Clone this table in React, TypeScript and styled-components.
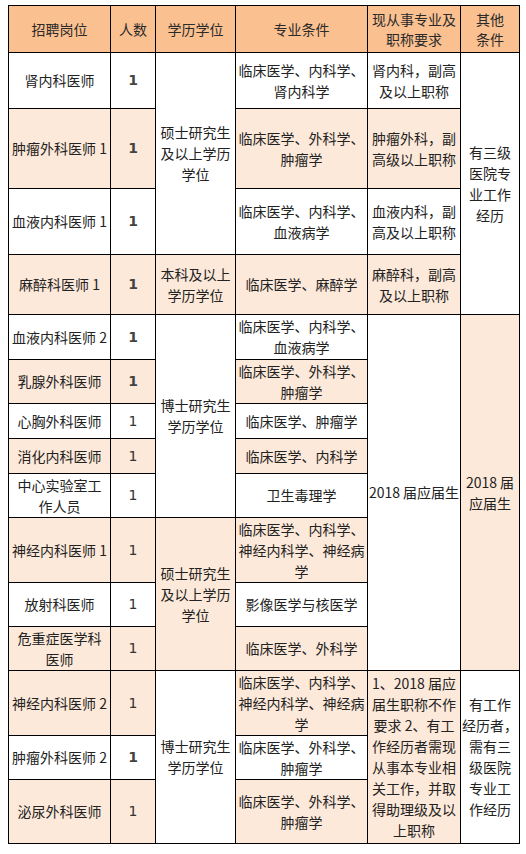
import React from 'react';
import styled, { createGlobalStyle } from 'styled-components';

type Tone = 'head' | 'white' | 'peach';

const GlobalStyle = createGlobalStyle`
  html, body {
    margin: 0;
    padding: 0;
    background: #ffffff;
  }
  body {
    font-family: "Noto Sans CJK SC", "Noto Sans", "DejaVu Sans", sans-serif;
  }
`;

const Page = styled.div`
  padding: 5px 0 0 8px;
`;

const Sheet = styled.div`
  display: grid;
  box-sizing: border-box;
  width: 512px;
  grid-template-columns: 102px 45px 80px 132px 93px 59px;
  grid-template-rows:
    47px 56px 80px 66px 60px 45px 44px 35px 35px 44px
    65px 44px 44px 65px 44px 64px;
  border-left: 1px solid #000;
  border-top: 1px solid #000;
`;

const toneColor: Record<Tone, string> = {
  head: '#fac090',
  white: '#ffffff',
  peach: '#fde9d9',
};

const Cell = styled.div<{ $c: number; $r: number; $span: number; $tone: Tone; $bold: boolean }>`
  grid-column: ${(p) => p.$c};
  grid-row: ${(p) => p.$r} / span ${(p) => p.$span};
  box-sizing: border-box;
  border-right: 1px solid #000;
  border-bottom: 1px solid #000;
  background: ${(p) => toneColor[p.$tone]};
  display: flex;
  align-items: center;
  justify-content: center;
  text-align: center;
  padding: 0 1px;
  overflow: hidden;
  white-space: nowrap;
  font-size: 14px;
  line-height: 21px;
  color: #222;
  font-weight: ${(p) => (p.$bold ? 700 : 400)};
`;

const Head = styled(Cell)`
  line-height: 20px;
  color: #2a2a2a;
`;

const Count = styled(Cell)`
  font-family: "DejaVu Sans", "Noto Sans", sans-serif;
  font-size: 14px;
  color: ${(p) => (p.$bold ? '#444' : '#333')};
`;

const Text = styled.span`
  display: block;
`;

type CellDef = {
  c: number;
  r: number;
  span?: number;
  tone: Tone;
  lines: string[];
  bold?: boolean;
  kind?: 'head' | 'count' | 'text';
};

const W: Tone = 'white';
const P: Tone = 'peach';

const cells: CellDef[] = [
  { c: 1, r: 1, tone: 'head', lines: ['招聘岗位'], kind: 'head' },
  { c: 2, r: 1, tone: 'head', lines: ['人数'], kind: 'head' },
  { c: 3, r: 1, tone: 'head', lines: ['学历学位'], kind: 'head' },
  { c: 4, r: 1, tone: 'head', lines: ['专业条件'], kind: 'head' },
  { c: 5, r: 1, tone: 'head', lines: ['现从事专业及', '职称要求'], kind: 'head' },
  { c: 6, r: 1, tone: 'head', lines: ['其他', '条件'], kind: 'head' },

  { c: 1, r: 2, tone: W, lines: ['肾内科医师'] },
  { c: 2, r: 2, tone: W, lines: ['1'], kind: 'count', bold: true },
  { c: 3, r: 2, span: 3, tone: W, lines: ['硕士研究生', '及以上学历', '学位'] },
  { c: 4, r: 2, tone: W, lines: ['临床医学、内科学、', '肾内科学'] },
  { c: 5, r: 2, tone: W, lines: ['肾内科，副高', '及以上职称'] },
  { c: 6, r: 2, span: 4, tone: W, lines: ['有三级', '医院专', '业工作', '经历'] },

  { c: 1, r: 3, tone: P, lines: ['肿瘤外科医师 1'] },
  { c: 2, r: 3, tone: P, lines: ['1'], kind: 'count', bold: true },
  { c: 4, r: 3, tone: P, lines: ['临床医学、外科学、', '肿瘤学'] },
  { c: 5, r: 3, tone: P, lines: ['肿瘤外科，副', '高级以上职称'] },

  { c: 1, r: 4, tone: W, lines: ['血液内科医师 1'] },
  { c: 2, r: 4, tone: W, lines: ['1'], kind: 'count', bold: true },
  { c: 4, r: 4, tone: W, lines: ['临床医学、内科学、', '血液病学'] },
  { c: 5, r: 4, tone: W, lines: ['血液内科，副', '高及以上职称'] },

  { c: 1, r: 5, tone: P, lines: ['麻醉科医师 1'] },
  { c: 2, r: 5, tone: P, lines: ['1'], kind: 'count', bold: true },
  { c: 3, r: 5, tone: P, lines: ['本科及以上', '学历学位'] },
  { c: 4, r: 5, tone: P, lines: ['临床医学、麻醉学'] },
  { c: 5, r: 5, tone: P, lines: ['麻醉科，副高', '及以上职称'] },

  { c: 1, r: 6, tone: W, lines: ['血液内科医师 2'] },
  { c: 2, r: 6, tone: W, lines: ['1'], kind: 'count', bold: true },
  { c: 3, r: 6, span: 5, tone: W, lines: ['博士研究生', '学历学位'] },
  { c: 4, r: 6, tone: W, lines: ['临床医学、内科学、', '血液病学'] },
  { c: 5, r: 6, span: 8, tone: W, lines: ['2018 届应届生'] },
  { c: 6, r: 6, span: 8, tone: P, lines: ['2018 届', '应届生'] },

  { c: 1, r: 7, tone: P, lines: ['乳腺外科医师'] },
  { c: 2, r: 7, tone: P, lines: ['1'], kind: 'count', bold: true },
  { c: 4, r: 7, tone: P, lines: ['临床医学、外科学、', '肿瘤学'] },

  { c: 1, r: 8, tone: W, lines: ['心胸外科医师'] },
  { c: 2, r: 8, tone: W, lines: ['1'], kind: 'count' },
  { c: 4, r: 8, tone: W, lines: ['临床医学、肿瘤学'] },

  { c: 1, r: 9, tone: P, lines: ['消化内科医师'] },
  { c: 2, r: 9, tone: P, lines: ['1'], kind: 'count' },
  { c: 4, r: 9, tone: P, lines: ['临床医学、内科学'] },

  { c: 1, r: 10, tone: W, lines: ['中心实验室工', '作人员'] },
  { c: 2, r: 10, tone: W, lines: ['1'], kind: 'count' },
  { c: 4, r: 10, tone: W, lines: ['卫生毒理学'] },

  { c: 1, r: 11, tone: P, lines: ['神经内科医师 1'] },
  { c: 2, r: 11, tone: P, lines: ['1'], kind: 'count' },
  { c: 3, r: 11, span: 3, tone: P, lines: ['硕士研究生', '及以上学历', '学位'] },
  { c: 4, r: 11, tone: P, lines: ['临床医学、内科学、', '神经内科学、神经病', '学'] },

  { c: 1, r: 12, tone: W, lines: ['放射科医师'] },
  { c: 2, r: 12, tone: W, lines: ['1'], kind: 'count' },
  { c: 4, r: 12, tone: W, lines: ['影像医学与核医学'] },

  { c: 1, r: 13, tone: P, lines: ['危重症医学科', '医师'] },
  { c: 2, r: 13, tone: P, lines: ['1'], kind: 'count' },
  { c: 4, r: 13, tone: P, lines: ['临床医学、外科学'] },

  { c: 1, r: 14, tone: P, lines: ['神经内科医师 2'] },
  { c: 2, r: 14, tone: P, lines: ['1'], kind: 'count' },
  { c: 3, r: 14, span: 3, tone: W, lines: ['博士研究生', '学历学位'] },
  { c: 4, r: 14, tone: P, lines: ['临床医学、内科学、', '神经内科学、神经病', '学'] },
  {
    c: 5,
    r: 14,
    span: 3,
    tone: P,
    lines: [
      '1、2018 届应',
      '届生职称不作',
      '要求 2、有工',
      '作经历者需现',
      '从事本专业相',
      '关工作，并取',
      '得助理级及以',
      '上职称',
    ],
  },
  { c: 6, r: 14, span: 3, tone: W, lines: ['有工作', '经历者，', '需有三', '级医院', '专业工', '作经历'] },

  { c: 1, r: 15, tone: W, lines: ['肿瘤外科医师 2'] },
  { c: 2, r: 15, tone: W, lines: ['1'], kind: 'count', bold: true },
  { c: 4, r: 15, tone: W, lines: ['临床医学、外科学、', '肿瘤学'] },

  { c: 1, r: 16, tone: P, lines: ['泌尿外科医师'] },
  { c: 2, r: 16, tone: P, lines: ['1'], kind: 'count' },
  { c: 4, r: 16, tone: P, lines: ['临床医学、外科学、', '肿瘤学'] },
];

function renderCell(d: CellDef, i: number) {
  const props = {
    $c: d.c,
    $r: d.r,
    $span: d.span ?? 1,
    $tone: d.tone,
    $bold: !!d.bold,
  };
  const body = (
    <Text>
      {d.lines.map((l, j) => (
        <React.Fragment key={j}>
          {j > 0 && <br />}
          {l}
        </React.Fragment>
      ))}
    </Text>
  );
  if (d.kind === 'head') return <Head key={i} {...props}>{body}</Head>;
  if (d.kind === 'count') return <Count key={i} {...props}>{body}</Count>;
  return <Cell key={i} {...props}>{body}</Cell>;
}

export default function App() {
  return (
    <>
      <GlobalStyle />
      <Page>
        <Sheet>{cells.map(renderCell)}</Sheet>
      </Page>
    </>
  );
}
